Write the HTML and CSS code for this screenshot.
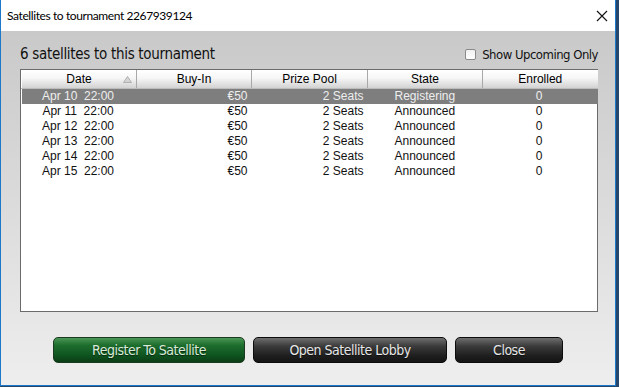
FILE: index.html
```html
<!DOCTYPE html>
<html>

<head>
    <meta charset="utf-8">
    <title>Satellites to tournament 2267939124</title>
    <link rel="stylesheet" href="styles.css">
</head>

<body>
    <div class="window">
        <div class="titlebar">
            <span class="title">Satellites to tournament 2267939124</span>
            <svg class="close" width="12" height="12" viewBox="0 0 12 12">
                <path d="M1 1 L11 11 M11 1 L1 11" stroke="#111" stroke-width="1.1" fill="none" />
            </svg>
        </div>
        <div class="content">
            <div class="toolbar">
                <h1>6 satellites to this tournament</h1>
                <label class="upcoming">
                    <span class="check"></span>
                    Show Upcoming Only
                </label>
            </div>
            <div class="list">
                <table>
                    <colgroup>
                        <col class="c115">
                        <col class="c115">
                        <col class="c116">
                        <col class="c115">
                        <col class="c115">
                    </colgroup>
                    <thead>
                        <tr>
                            <th class="sorted">Date
                                <svg class="arrow" width="9" height="7" viewBox="0 0 9 7">
                                    <polygon points="4.5,0.5 8.5,6.5 0.5,6.5" fill="#d4d4d4" stroke="#b0b0b0" stroke-width="1" />
                                </svg>
                            </th>
                            <th>Buy-In</th>
                            <th>Prize Pool</th>
                            <th>State</th>
                            <th>Enrolled</th>
                        </tr>
                    </thead>
                    <tbody>
                        <tr class="selected">
                            <td class="date">Apr 10  22:00</td>
                            <td class="num">€50</td>
                            <td class="num">2 Seats</td>
                            <td class="state">Registering</td>
                            <td class="mid">0</td>
                        </tr>
                        <tr>
                            <td class="date">Apr 11  22:00</td>
                            <td class="num">€50</td>
                            <td class="num">2 Seats</td>
                            <td class="state">Announced</td>
                            <td class="mid">0</td>
                        </tr>
                        <tr>
                            <td class="date">Apr 12  22:00</td>
                            <td class="num">€50</td>
                            <td class="num">2 Seats</td>
                            <td class="state">Announced</td>
                            <td class="mid">0</td>
                        </tr>
                        <tr>
                            <td class="date">Apr 13  22:00</td>
                            <td class="num">€50</td>
                            <td class="num">2 Seats</td>
                            <td class="state">Announced</td>
                            <td class="mid">0</td>
                        </tr>
                        <tr>
                            <td class="date">Apr 14  22:00</td>
                            <td class="num">€50</td>
                            <td class="num">2 Seats</td>
                            <td class="state">Announced</td>
                            <td class="mid">0</td>
                        </tr>
                        <tr>
                            <td class="date">Apr 15  22:00</td>
                            <td class="num">€50</td>
                            <td class="num">2 Seats</td>
                            <td class="state">Announced</td>
                            <td class="mid">0</td>
                        </tr>
                    </tbody>
                </table>
            </div>
            <div class="buttons">
                <button class="btn green register">Register To Satellite</button>
                <button class="btn dark lobby">Open Satellite Lobby</button>
                <button class="btn dark close-btn">Close</button>
            </div>
        </div>
    </div>
</body>

</html>
```

FILE: styles.css
```css
* {
    margin: 0;
    padding: 0;
    box-sizing: border-box;
}

body {
    width: 619px;
    height: 387px;
    background: #27466b;
    overflow: hidden;
}

.window {
    width: 616px;
    height: 386px;
    border: 1px solid #1d78c9;
    border-top: none;
    display: flex;
    flex-direction: column;
}

.titlebar {
    height: 31px;
    background: #fff;
    display: flex;
    align-items: center;
    justify-content: space-between;
    padding: 0 7px 0 6px;
}

.title {
    font-family: Lato, sans-serif;
    font-size: 12px;
    letter-spacing: -0.4px;
    color: #000;
}

.content {
    flex: 1;
    background: linear-gradient(#c9c9c9, #eeeeee);
    display: flex;
    flex-direction: column;
}

.toolbar {
    height: 20px;
    margin: 13px 17px 5px 19px;
    display: flex;
    align-items: center;
    justify-content: space-between;
    font-family: "DejaVu Sans Condensed", sans-serif;
    color: #111;
}

h1 {
    font-size: 15px;
    font-weight: normal;
    letter-spacing: -0.3px;
}

.upcoming {
    display: flex;
    align-items: center;
    gap: 6px;
    font-size: 13px;
    letter-spacing: -0.5px;
}

.check {
    width: 11px;
    height: 11px;
    border: 1px solid #8a8a8a;
    border-radius: 2px;
    background: linear-gradient(#f0f0f0, #ffffff);
}

.list {
    width: 578px;
    height: 243px;
    margin-left: 19px;
    border: 1px solid #6b6b6b;
    background: #fff;
}

table {
    width: 576px;
    table-layout: fixed;
    border-collapse: collapse;
    font-family: "Liberation Sans", Arial, sans-serif;
    font-size: 12px;
}

.c115 {
    width: 115px;
}

.c116 {
    width: 116px;
}

th {
    height: 18px;
    font-weight: normal;
    color: #000;
    background: linear-gradient(#ffffff, #f6f6f6 45%, #d2d2d2);
    border-right: 1px solid #a9a9a9;
    border-left: 1px solid #fff;
    border-bottom: 1px solid #bcbcbc;
    position: relative;
    padding: 0;
}

th:last-child {
    border-right: none;
}

.arrow {
    position: absolute;
    right: 4px;
    top: 6px;
}

td {
    height: 15px;
    padding: 0;
    white-space: pre;
    color: #111;
    line-height: 15px;
}

.selected td {
    background: #7e7e7e;
    color: #eeeeee;
}

.date {
    text-align: center;
    padding-right: 2px;
}

.num {
    text-align: right;
    padding-right: 4px;
}

.state {
    padding-left: 27px;
}

.mid {
    text-align: center;
    padding-right: 2px;
}

.buttons {
    margin-top: 25px;
    display: flex;
    justify-content: center;
    gap: 8px;
}

.btn {
    height: 26px;
    border-radius: 5px;
    font-family: "DejaVu Sans Condensed", sans-serif;
    font-size: 14px;
    letter-spacing: -0.5px;
    text-shadow: 0 1px 1px rgba(0, 0, 0, .6);
}

.green {
    color: #d8ecd8;
    border: 1px solid #1c3a1f;
    background: linear-gradient(#4a9656, #1d6e2e 30%, #0f5620 70%, #0a3c15);
}

.dark {
    color: #e6e6e6;
    border: 1px solid #0c0c0c;
    background: linear-gradient(#6e6e6e, #3a3a3a 35%, #1e1e1e 75%, #141414);
}

.register {
    width: 192px;
}

.lobby {
    width: 194px;
}

.close-btn {
    width: 108px;
}
```
